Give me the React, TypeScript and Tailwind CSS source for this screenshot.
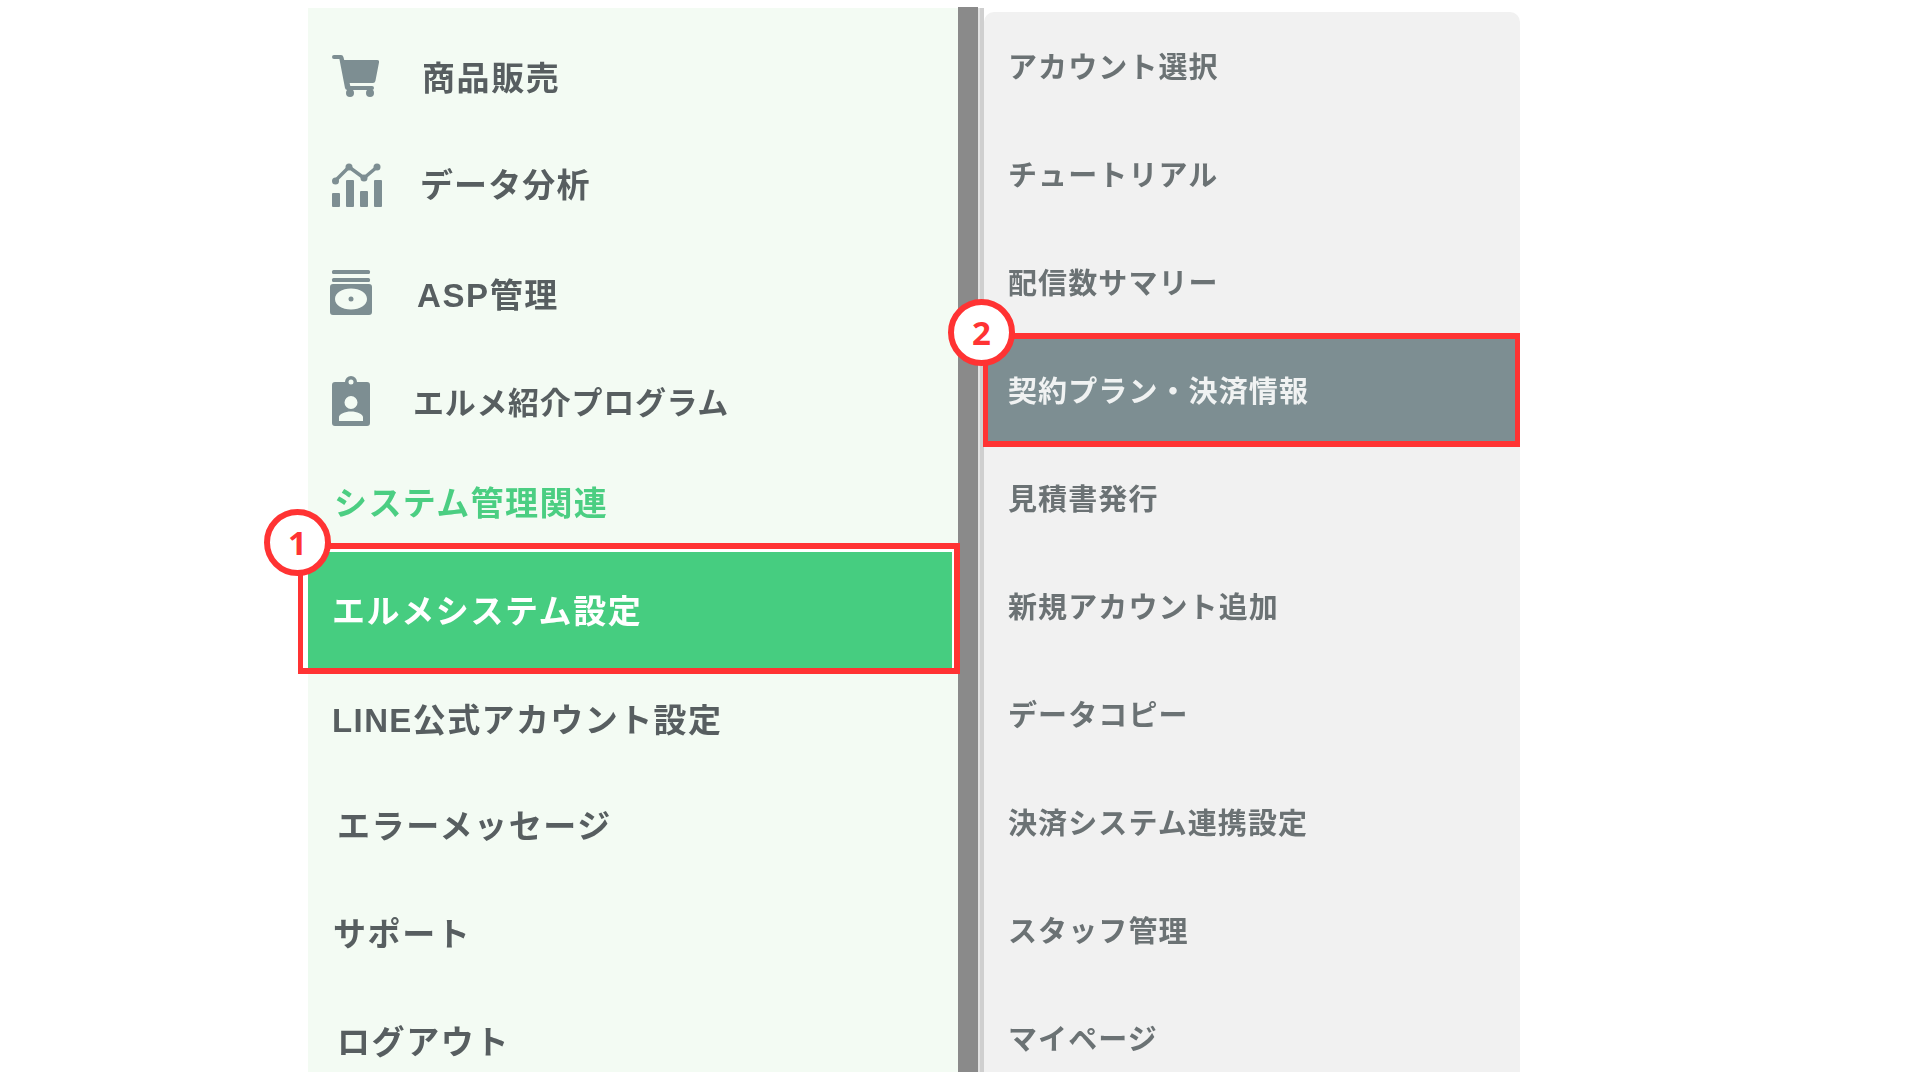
const font = "font-['Liberation_Sans','Noto_Sans_CJK_JP',sans-serif]";
const soft = "blur-[0.3px]";

function CartIcon() {
  return (
    <svg viewBox="0 0 47 42" className="h-[42px] w-[47px]" fill="#7d8e92">
      <path d="M2 0 H9 A2.5 2.5 0 0 1 11.4 1.9 L12.2 5 H45 A2 2 0 0 1 47 7.4 L43.4 26 A2.5 2.5 0 0 1 41 28 H17.6 L18.3 31 H40 A2 2 0 0 1 40 35 H15.5 A2.5 2.5 0 0 1 13 33 L7.4 4 H2 A2 2 0 0 1 2 0 Z" />
      <circle cx="18" cy="38" r="4" />
      <circle cx="38" cy="38" r="4" />
    </svg>
  );
}

function ChartIcon() {
  return (
    <svg viewBox="0 0 50 44" className="mt-[4px] h-[44px] w-[50px]" fill="#7d8e92">
      <path d="M3 18 L17 4 L32 15 L45 4" fill="none" stroke="#7d8e92" strokeWidth="3.5" strokeLinecap="round" strokeLinejoin="round" />
      <circle cx="3.5" cy="18" r="3.5" />
      <circle cx="17" cy="4" r="3.5" />
      <circle cx="32" cy="15" r="3.5" />
      <circle cx="45" cy="4" r="3.5" />
      <rect x="0" y="30" width="8" height="14" rx="1" />
      <rect x="14" y="17" width="8" height="27" rx="1" />
      <rect x="28" y="28" width="8" height="16" rx="1" />
      <rect x="42" y="17" width="8" height="27" rx="1" />
    </svg>
  );
}

function AspIcon() {
  return (
    <svg viewBox="0 0 42 45" className="-ml-[2px] h-[45px] w-[42px]" fill="#7d8e92">
      <rect x="2" y="0" width="38" height="4" rx="1.5" />
      <rect x="2" y="8" width="38" height="4" rx="1.5" />
      <path fillRule="evenodd" d="M3 14 H39 A3 3 0 0 1 42 17 V42 A3 3 0 0 1 39 45 H3 A3 3 0 0 1 0 42 V17 A3 3 0 0 1 3 14 Z M21 18.5 C12 18.5 5 23 5 29 C5 35 12 39.5 21 39.5 C30 39.5 37 35 37 29 C37 23 30 18.5 21 18.5 Z" />
      <circle cx="21" cy="29" r="2.5" />
    </svg>
  );
}

function BadgeIcon() {
  return (
    <svg viewBox="0 0 38 50" className="h-[50px] w-[38px]" fill="#7d8e92">
      <path fillRule="evenodd" d="M19 0 A6 6 0 0 1 25 6 H35 A3 3 0 0 1 38 9 V47 A3 3 0 0 1 35 50 H3 A3 3 0 0 1 0 47 V9 A3 3 0 0 1 3 6 H13 A6 6 0 0 1 19 0 Z M19 3.5 A2.5 2.5 0 1 0 19 8.5 A2.5 2.5 0 1 0 19 3.5 Z M19 20 A6.5 6.5 0 1 0 19 33 A6.5 6.5 0 1 0 19 20 Z M7 45 H31 V41 C31 38 25 35.5 19 35.5 C13 35.5 7 38 7 41 Z" />
    </svg>
  );
}

const leftRows = [
  { label: "商品販売", h: "h-[107px]", text: "", icon: <CartIcon />, iconBox: "w-[90px]" },
  { label: "データ分析", h: "h-[107px]", text: "tracking-[1.1px]", icon: <ChartIcon />, iconBox: "w-[88px]" },
  { label: "ASP管理", h: "h-[112px]", text: "", icon: <AspIcon />, iconBox: "w-[85px]" },
  { label: "エルメ紹介プログラム", h: "h-[106px]", text: "text-[31px] tracking-[0.7px]", icon: <BadgeIcon />, iconBox: "w-[81px]" },
];

const bottomRows = [
  { label: "LINE公式アカウント設定", h: "h-[102px]", pl: "pl-[24px]", text: "tracking-[1.4px]" },
  { label: "エラーメッセージ", h: "h-[110px]", pl: "pl-[29px]", text: "" },
  { label: "サポート", h: "h-[106px]", pl: "pl-[25px]", text: "" },
];

const rightRows = [
  "アカウント選択",
  "チュートリアル",
  "配信数サマリー",
  "契約プラン・決済情報",
  "見積書発行",
  "新規アカウント追加",
  "データコピー",
  "決済システム連携設定",
  "スタッフ管理",
  "マイページ",
];

function Badge({ n, className }: { n: string; className: string }) {
  return (
    <div className={`absolute z-10 flex size-[67px] items-center justify-center rounded-full border-[6px] border-[#ff3333] bg-white text-[33px] font-bold tracking-normal text-[#ff3333] font-['Open_Sans',sans-serif] ${className}`}>
      {n}
    </div>
  );
}

export default function App() {
  return (
    <div className={`flex h-screen w-full overflow-hidden bg-white pl-[308px] pt-[8px] ${font}`}>
      <div className="h-[1064px] w-[650px] shrink-0 bg-[#f3fbf3] pt-[16px] text-[33px] font-bold tracking-[1.6px] text-[#575e60]">
        {leftRows.map((row) => (
          <div key={row.label} className={`flex items-center pl-[24px] pt-[3px] ${row.h}`}>
            <div className={`flex shrink-0 items-center pb-[7px] ${row.iconBox}`}>{row.icon}</div>
            <span className={`${soft} ${row.text}`}>{row.label}</span>
          </div>
        ))}
        <div className="flex h-[92px] items-center pl-[26px] pt-[3px] text-[#4bce82] tracking-[1.4px]">
          <span className={soft}>システム管理関連</span>
        </div>
        <div className="relative mt-[4px] flex h-[116px] w-[644px] items-center bg-[#46cd80] pl-[24px] pt-[3px] text-white">
          <div className="pointer-events-none absolute -bottom-[6px] -left-[10px] -right-[8px] -top-[9px] border-[6px] border-l-[5px] border-[#ff3333]">
            <div className="absolute inset-0 border-r-[2px] border-t-[3px] border-white" />
          </div>
          <Badge n="1" className="-left-[44px] -top-[43px]" />
          <span className={soft}>エルメシステム設定</span>
        </div>
        {bottomRows.map((row) => (
          <div key={row.label} className={`flex items-center pt-[3px] ${row.pl} ${row.h}`}>
            <span className={`${soft} ${row.text}`}>{row.label}</span>
          </div>
        ))}
        <div className="flex h-[86px] items-center pl-[29px] pt-[27px]">
          <span className={soft}>ログアウト</span>
        </div>
      </div>
      <div className="-mt-[1px] h-[1065px] w-[20px] shrink-0 bg-[#8a8a8a]" />
      <div className="h-[1064px] w-[2px] shrink-0 bg-[#e2e2e2]" />
      <div className="h-[1064px] w-[4px] shrink-0 bg-[#cfcfcf]" />
      <div className="mt-[4px] h-[1060px] w-[536px] shrink-0 rounded-t-[10px] bg-[#f1f1f1] text-[29px] font-bold tracking-[1.1px] text-[#6b7274]">
        {rightRows.map((label) => {
          const active = label === "契約プラン・決済情報";
          return (
            <div key={label} className={`relative flex h-[108px] items-center pl-[24px] pt-[6px] ${active ? "bg-[#7d8e92] text-[#f0f2f2]" : ""}`}>
              {active && (
                <>
                  <div className="pointer-events-none absolute -bottom-[3px] -left-[1px] right-0 -top-[3px] border-[6px] border-x-[5px] border-[#ff3333]" />
                  <Badge n="2" className="-left-[36px] -top-[37px]" />
                </>
              )}
              <span className={soft}>{label}</span>
            </div>
          );
        })}
      </div>
    </div>
  );
}
